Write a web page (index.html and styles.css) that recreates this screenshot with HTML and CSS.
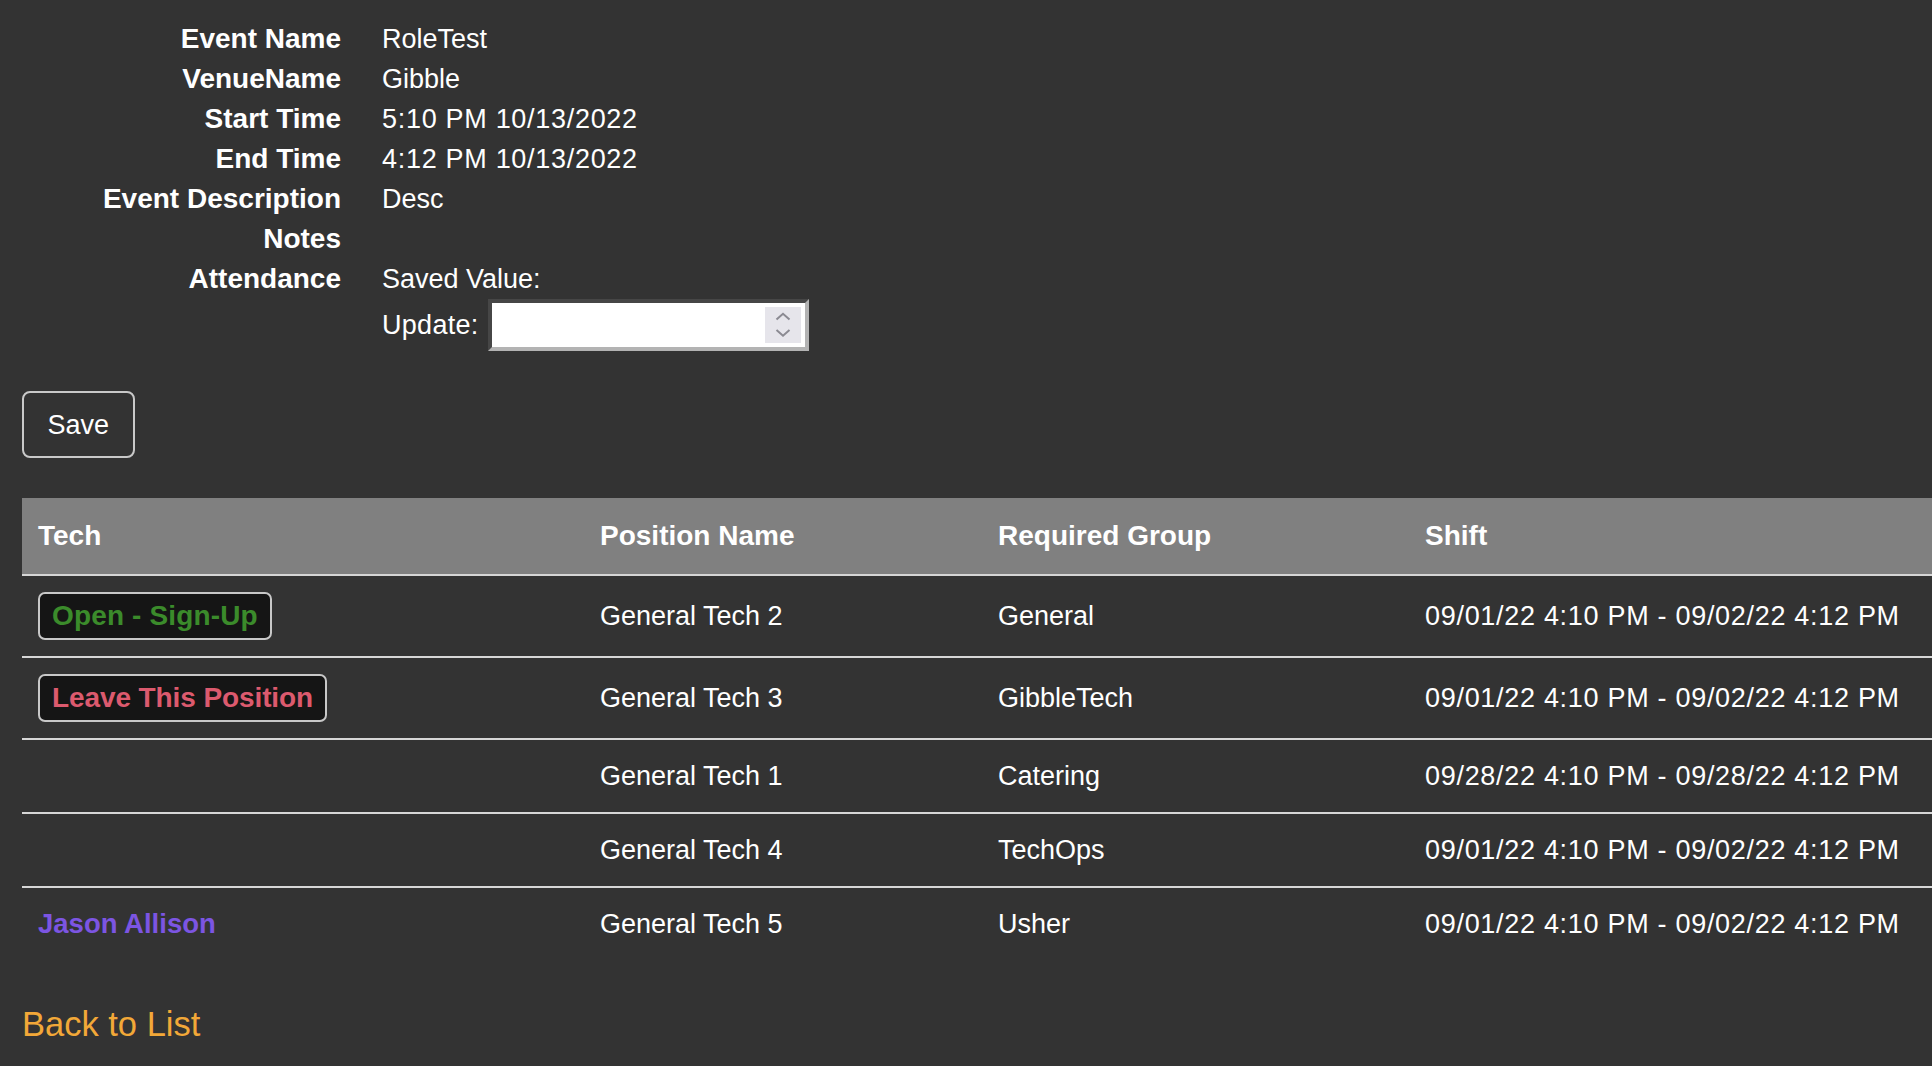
FILE: index.html
```html
<!DOCTYPE html>
<html lang="en">
<head>
<meta charset="utf-8">
<title>Event Details</title>
<link rel="stylesheet" href="styles.css">
</head>
<body>
<div class="page">
  <dl class="details">
    <dt>Event Name</dt><dd>RoleTest</dd>
    <dt>VenueName</dt><dd>Gibble</dd>
    <dt>Start Time</dt><dd class="num">5:10 PM 10/13/2022</dd>
    <dt>End Time</dt><dd class="num">4:12 PM 10/13/2022</dd>
    <dt>Event Description</dt><dd>Desc</dd>
    <dt>Notes</dt><dd>&nbsp;</dd>
    <dt>Attendance</dt>
    <dd>
      <div>Saved Value:</div>
      <div class="update-row">
        <span>Update:</span>
        <span class="num-input">
          <svg class="spinner" width="36" height="36" viewBox="0 0 36 36">
            <rect width="36" height="36" fill="#e6e5eb"/>
            <polyline points="11.5,12.5 18,6.8 24.5,12.5" fill="none" stroke="#8b8a92" stroke-width="2"/>
            <polyline points="11.5,23 18,28.7 24.5,23" fill="none" stroke="#8b8a92" stroke-width="2"/>
          </svg>
        </span>
      </div>
    </dd>
  </dl>

  <button class="save-btn" type="button">Save</button>

  <table class="roles">
    <colgroup>
      <col class="c-tech">
      <col class="c-pos">
      <col class="c-group">
      <col class="c-shift">
    </colgroup>
    <thead>
      <tr><th>Tech</th><th>Position Name</th><th>Required Group</th><th>Shift</th></tr>
    </thead>
    <tbody>
      <tr>
        <td><div class="cell-flex"><span class="pill pill-open">Open - Sign-Up</span></div></td>
        <td>General Tech 2</td><td>General</td><td class="num">09/01/22 4:10 PM - 09/02/22 4:12 PM</td>
      </tr>
      <tr>
        <td><div class="cell-flex"><span class="pill pill-leave">Leave This Position</span></div></td>
        <td>General Tech 3</td><td>GibbleTech</td><td class="num">09/01/22 4:10 PM - 09/02/22 4:12 PM</td>
      </tr>
      <tr>
        <td></td><td>General Tech 1</td><td>Catering</td><td class="num">09/28/22 4:10 PM - 09/28/22 4:12 PM</td>
      </tr>
      <tr>
        <td></td><td>General Tech 4</td><td>TechOps</td><td class="num">09/01/22 4:10 PM - 09/02/22 4:12 PM</td>
      </tr>
      <tr>
        <td><span class="tech-name">Jason Allison</span></td><td>General Tech 5</td><td>Usher</td><td class="num">09/01/22 4:10 PM - 09/02/22 4:12 PM</td>
      </tr>
    </tbody>
  </table>

  <p class="back"><a href="#">Back to List</a></p>
</div>
</body>
</html>
```
FILE: styles.css
```css
html, body {
  margin: 0;
  padding: 0;
  background: #333333;
}

body {
  color: #ffffff;
  font-family: "Liberation Sans", Arial, Helvetica, sans-serif;
  font-size: 27px;
  line-height: 40px;
}

.page {
  padding: 19px 0 0 22px;
}

.num {
  letter-spacing: 0.7px;
}

.details {
  display: grid;
  grid-template-columns: 319px auto;
  column-gap: 41px;
  margin: 0;
}

.details dt {
  font-weight: bold;
  font-size: 28px;
  text-align: right;
}

.details dd {
  margin: 0;
}

.update-row {
  display: flex;
  align-items: center;
  gap: 9px;
  height: 52px;
  letter-spacing: 0.3px;
}

.num-input {
  box-sizing: border-box;
  width: 321px;
  height: 52px;
  background: #ffffff;
  border: 4px solid;
  border-color: #464646 #b3b3b3 #b3b3b3 #464646;
  display: flex;
  align-items: center;
  justify-content: flex-end;
  padding-right: 4px;
}

.spinner {
  display: block;
}

.save-btn {
  margin-top: 40px;
  box-sizing: border-box;
  height: 67px;
  padding: 12px 23.5px 11px;
  background: transparent;
  color: #ffffff;
  border: 2px solid #c9c9c9;
  border-radius: 8px;
  font-family: "Liberation Sans", Arial, Helvetica, sans-serif;
  font-size: 27px;
  line-height: 40px;
  display: block;
}

.roles {
  margin-top: 40px;
  width: 100%;
  border-collapse: collapse;
  table-layout: fixed;
}

.c-tech { width: 562px; }
.c-pos { width: 398px; }
.c-group { width: 427px; }
.c-shift { width: auto; }

.roles th {
  background: #808080;
  font-weight: bold;
  font-size: 28px;
  text-align: left;
  padding: 18px 16px;
  border-bottom: 2px solid #d6d6d6;
  white-space: nowrap;
}

.roles td {
  padding: 16px 16px;
  vertical-align: middle;
  white-space: nowrap;
}

.roles tbody tr:not(:last-child) td {
  border-bottom: 2px solid #d6d6d6;
}

.cell-flex {
  display: flex;
  align-items: center;
}

.pill {
  box-sizing: border-box;
  display: block;
  height: 48px;
  padding: 2px 12px;
  line-height: 40px;
  background: #151515;
  border: 2px solid #c8c8c8;
  border-radius: 7px;
  font-weight: bold;
  font-size: 28px;
}

.pill-open { color: #3b8b2b; letter-spacing: 0.15px; }
.pill-leave { color: #dc5a6e; letter-spacing: -0.1px; }

.tech-name {
  color: #7c55e2;
  font-weight: bold;
  font-size: 27.5px;
}

.back {
  margin: 44px 0 0 0;
  font-size: 34.5px;
  line-height: 40px;
}

.back a {
  color: #f2a838;
  text-decoration: none;
}
```
